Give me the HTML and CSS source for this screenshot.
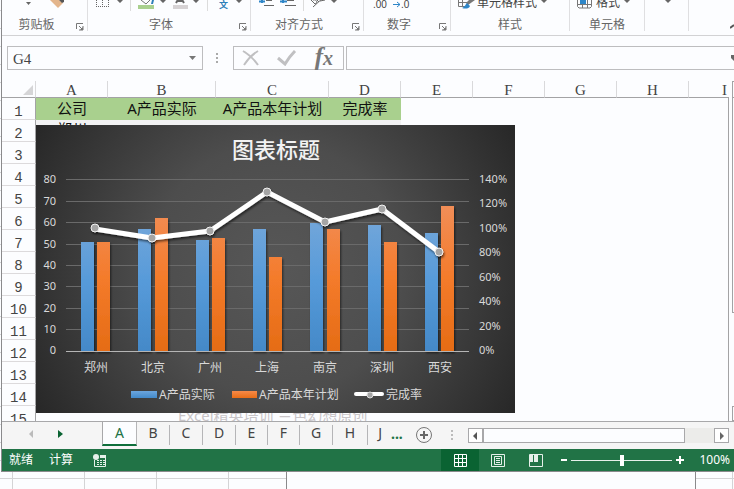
FILE: index.html
```html
<!DOCTYPE html>
<html lang="zh-CN">
<head>
<meta charset="utf-8">
<title>图表标题</title>
<link rel="stylesheet" href="styles.css">
</head>
<body>
<main class="window">
  <section class="ribbon">
    <div class="group clipboard">
      <svg class="tools" width="85" height="12" viewBox="0 0 85 12">
        <path d="M24 2h5l-2.500 3z" fill="#666"/>
        <path d="M48 0h9l4 3-5 5-2-2z" fill="#e3b58c"/><path d="M57 0h5v2l-2 1z" fill="#555"/>
      </svg>
      <div class="caption">剪贴板<button class="launch" aria-label="剪贴板"><svg width="8" height="8" viewBox="0 0 8 8"><path d="M.5 6V.5H7M3 3l3 3M7 3v4H3" fill="none" stroke="#777"/><path d="M7 4v3H4z" fill="#777"/></svg></button></div>
    </div>
    <div class="group font">
      <svg class="tools" width="162" height="12" viewBox="0 0 162 12">
        <g stroke="#666" stroke-dasharray="1 1" fill="none"><path d="M8 6.500h13M8.500 0v7M14.500 0v7M20.500 0v7"/></g>
        <path d="M29 0h6l-3 3zM72 0h6l-3 3zM105 0h6l-3 3zM148 0h6l-3 3z" fill="#666"/>
        <path d="M42.500 0v11M119.500 0v11" stroke="#dcdcdc"/>
        <path d="M53 0l5 4 5-5" fill="none" stroke="#777"/><path d="M64 0l2 0-1 4h-2z" fill="#2e7fb8"/>
        <path d="M50 5h16v4H50z" fill="#a9d08e"/>
        <path d="M88 3l3-5h2l3 5M89 1h6" fill="none" stroke="#666" stroke-width="2"/>
        <path d="M85 5h15v4H85z" fill="#d6d2d4"/>
        <text class="phonetic" x="131" y="8">文</text>
      </svg>
      <div class="caption">字体<button class="launch" aria-label="字体"><svg width="8" height="8" viewBox="0 0 8 8"><path d="M.5 6V.5H7M3 3l3 3M7 3v4H3" fill="none" stroke="#777"/><path d="M7 4v3H4z" fill="#777"/></svg></button></div>
    </div>
    <div class="group align">
      <svg class="tools" width="112" height="12" viewBox="0 0 112 12">
        <path d="M11 0v3M8 1.500h6M32 0v3M29 1.500h7" stroke="#2e86c8" stroke-width="2"/>
        <path d="M15 .5h6M13 5.500h10M36 .5h7M34 5.500h11" stroke="#666"/>
        <path d="M52.500 0v11" stroke="#dcdcdc"/>
        <path d="M60 0l4 4c3-1 2-5-2-4M66 0l2 2M62 7L74-4M69 1l5-1" fill="none" stroke="#666" stroke-width="1"/>
        <path d="M80 0h6l-3 3z" fill="#666"/>
      </svg>
      <div class="caption">对齐方式<button class="launch" aria-label="对齐方式"><svg width="8" height="8" viewBox="0 0 8 8"><path d="M.5 6V.5H7M3 3l3 3M7 3v4H3" fill="none" stroke="#777"/><path d="M7 4v3H4z" fill="#777"/></svg></button></div>
    </div>
    <div class="group number">
      <svg class="tools" width="86" height="12" viewBox="0 0 86 12">
        <text class="decimal" x="9" y="8">.00</text><text class="decimal" x="37" y="8">.0</text>
        <path d="M29 4.500h7M33 2l3 2.500L33 7" fill="none" stroke="#2e86c8" stroke-width="1"/>
      </svg>
      <div class="caption">数字<button class="launch" aria-label="数字"><svg width="8" height="8" viewBox="0 0 8 8"><path d="M.5 6V.5H7M3 3l3 3M7 3v4H3" fill="none" stroke="#777"/><path d="M7 4v3H4z" fill="#777"/></svg></button></div>
    </div>
    <div class="group styles">
      <div class="tools command">
        <svg width="18" height="12" viewBox="0 0 18 12"><path d="M.5 0v6.500H8M4.500 0v6M0 2.500h9" fill="none" stroke="#777"/><path d="M17 0l-7 5-2-2 3-3z" fill="#777"/><path d="M9 3l3 3c-1 3-5 3-8 2 3-1 3-3 5-5z" fill="#2e86c8"/></svg>
        <span>单元格样式</span>
        <svg width="6" height="12" viewBox="0 0 6 12"><path d="M0 0h6L3 3z" fill="#666"/></svg>
      </div>
      <div class="caption">样式</div>
    </div>
    <div class="group cells">
      <div class="tools command">
        <svg width="18" height="12" viewBox="0 0 18 12"><path d="M.5 0v6.500L2 8h11l1.500-1.500V0M5.500 0v8M10.500 0v8M1 4.500h13" fill="none" stroke="#777"/><path d="M3 0h6v4H3z" fill="#2e86c8"/></svg>
        <span>格式</span>
        <svg width="6" height="12" viewBox="0 0 6 12"><path d="M0 0h6L3 3z" fill="#666"/></svg>
      </div>
      <div class="caption">单元格</div>
    </div>
    <div class="group editing">
      <svg class="tools" width="43" height="12" viewBox="0 0 43 12"><path d="M20 0h6l-3 3z" fill="#666"/></svg>
    </div>
    <button class="collapse" aria-label="折叠"><svg width="4" height="5" viewBox="0 0 4 5"><path d="M0 4l4-3" stroke="#555" stroke-width="2"/></svg></button>
  </section>

  <section class="formula">
    <div class="namebox"><input type="text" value="G4" aria-label="名称框"><button aria-label="名称"><svg width="7" height="4" viewBox="0 0 7 4"><path d="M0 0h7L3.500 4z" fill="#777"/></svg></button></div>
    <svg class="grip" width="3" height="12" viewBox="0 0 3 12"><path d="M0 1h2v2H0zM0 5h2v2H0zM0 9h2v2H0z" fill="#aaa"/></svg>
    <div class="actions">
      <button aria-label="取消"><svg width="18" height="16" viewBox="0 0 18 16"><path d="M1 1c5 3 11 8 15 14M16 1C11 4 6 9 2 15" fill="none" stroke="#c0c0c2" stroke-width="2"/></svg></button>
      <button aria-label="输入"><svg width="20" height="16" viewBox="0 0 20 16"><path d="M1 8l7 6C11 9 14 5 18 1" fill="none" stroke="#c0c0c2" stroke-width="3"/></svg></button>
      <button class="fx"><span class="f">f</span><span class="x">x</span></button>
    </div>
    <div class="entry"><input type="text" aria-label="编辑栏"><svg width="3" height="6" viewBox="0 0 3 6"><path d="M0 0h3v6L0 3z" fill="#666"/></svg></div>
  </section>

  <section class="sheet">
    <div class="grid">
      <table>
        <colgroup><col class="c-head"><col class="c-std"><col class="c-b"><col class="c-c"><col class="c-std"><col class="c-std"><col class="c-std"><col class="c-std"><col class="c-std"><col class="c-std"></colgroup>
        <thead><tr><th class="corner"><svg width="10" height="10" viewBox="0 0 10 10"><path d="M10 0v10H0z" fill="#d5d5d7"/></svg></th><th>A</th><th>B</th><th>C</th><th>D</th><th>E</th><th>F</th><th>G</th><th>H</th><th>I</th></tr></thead>
        <tbody>
          <tr class="titles"><th>1</th><td>公司</td><td>A产品实际</td><td>A产品本年计划</td><td>完成率</td></tr>
          <tr class="shaded"><th>2</th><td>郑州</td><td></td><td></td><td></td></tr>
          <tr><th>3</th></tr><tr><th>4</th></tr><tr><th>5</th></tr><tr><th>6</th></tr><tr><th>7</th></tr><tr><th>8</th></tr><tr><th>9</th></tr><tr><th>10</th></tr><tr><th>11</th></tr><tr><th>12</th></tr><tr><th>13</th></tr><tr><th>14</th></tr>
          <tr><th>15</th><td></td><td class="credit" colspan="3">Excel精英培训 兰色幻想原创</td></tr>
        </tbody>
      </table>
      <svg class="chart" width="479" height="288" viewBox="0 0 479 288" role="img" aria-label="图表标题">
        <defs>
          <radialGradient id="bg" gradientUnits="userSpaceOnUse" cx="240" cy="144" r="280"><stop offset="0" stop-color="#575757"/><stop offset=".45" stop-color="#4d4d4d"/><stop offset="1" stop-color="#272727"/></radialGradient>
          <linearGradient id="blue" gradientUnits="userSpaceOnUse" x1="0" y1="90" x2="0" y2="226"><stop offset="0" stop-color="#74a7da"/><stop offset=".5" stop-color="#569ad9"/><stop offset="1" stop-color="#4489c8"/></linearGradient>
          <linearGradient id="orange" gradientUnits="userSpaceOnUse" x1="0" y1="80" x2="0" y2="226"><stop offset="0" stop-color="#f18e58"/><stop offset=".5" stop-color="#f47b2b"/><stop offset="1" stop-color="#e56c15"/></linearGradient>
          <linearGradient id="keyBlue" x1="0" y1="0" x2="0" y2="1"><stop offset="0" stop-color="#6ba5dd"/><stop offset="1" stop-color="#438aca"/></linearGradient>
          <linearGradient id="keyOrange" x1="0" y1="0" x2="0" y2="1"><stop offset="0" stop-color="#f58a4a"/><stop offset="1" stop-color="#e86d16"/></linearGradient>
          <filter id="shade" x="-10%" y="-20%" width="120%" height="150%"><feDropShadow dx="1" dy="2" stdDeviation="1" flood-color="#000" flood-opacity=".55"/></filter>
        </defs>
        <rect width="479" height="288" fill="url(#bg)"/>
        <text class="title" x="240" y="33">图表标题</text>
        <path class="rules" d="M30 54.500h403M30 76.500h403M30 97.500h403M30 119.500h403M30 140.500h403M30 161.500h403M30 183.500h403M30 204.500h403"/>
        <g filter="url(#shade)">
          <path fill="url(#blue)" d="M45 117h13v109H45zM102 104h13v122h-13zM160 115h13v111h-13zM217 104h13v122h-13zM274 98h13v128h-13zM332 100h13v126h-13zM389 108h13v118h-13z"/>
          <path fill="url(#orange)" d="M61 117h13v109H61zM119 93h13v133h-13zM176 113h13v113h-13zM233 132h13v94h-13zM291 104h13v122h-13zM348 117h13v109h-13zM405 81h13v145h-13z"/>
        </g>
        <path d="M30 226.500h403" stroke="#b5b5b5"/>
        <g filter="url(#shade)">
          <path d="M59 104l57 9 58-7 57-39 58 30 57-13 57 43" fill="none" stroke="#fff" stroke-width="5" stroke-linejoin="round"/>
          <g fill="#a5a5a5" stroke="#f2f2f2" stroke-width="1"><circle cx="59" cy="103" r="4"/><circle cx="116" cy="113" r="4"/><circle cx="174" cy="106" r="4"/><circle cx="231" cy="67" r="4"/><circle cx="289" cy="97" r="4"/><circle cx="346" cy="84" r="4"/><circle cx="403" cy="127" r="4"/></g>
        </g>
        <g class="scale left"><text x="20" y="58">80</text><text x="20" y="80">70</text><text x="20" y="101">60</text><text x="20" y="123">50</text><text x="20" y="144">40</text><text x="20" y="165">30</text><text x="20" y="187">20</text><text x="20" y="208">10</text><text x="20" y="229">0</text></g>
        <g class="scale"><text x="443" y="58">140%</text><text x="443" y="82">120%</text><text x="443" y="107">100%</text><text x="443" y="131">80%</text><text x="443" y="156">60%</text><text x="443" y="180">40%</text><text x="443" y="205">20%</text><text x="443" y="229">0%</text></g>
        <g class="names"><text x="60" y="247">郑州</text><text x="117" y="247">北京</text><text x="174" y="247">广州</text><text x="231" y="247">上海</text><text x="289" y="247">南京</text><text x="346" y="247">深圳</text><text x="404" y="247">西安</text></g>
        <rect x="95" y="266" width="26" height="7" fill="url(#keyBlue)"/>
        <rect x="196" y="266" width="25" height="7" fill="url(#keyOrange)"/>
        <path d="M320 269h26" stroke="#fff" stroke-width="4" stroke-linecap="round"/><circle cx="334" cy="270" r="3" fill="#a5a5a5" stroke="#ddd"/>
        <g class="keys"><text x="123" y="274">A产品实际</text><text x="223" y="274">A产品本年计划</text><text x="350" y="274">完成率</text></g>
      </svg>
    </div>
    <div class="vscroll"><span class="up"></span><span class="thumb"></span><span class="down"></span></div>
  </section>

  <nav class="tabs">
    <div class="steps">
      <button aria-label="上一个"><svg width="5" height="8" viewBox="0 0 5 8"><path d="M4 0v8L0 4z" fill="#bbb"/></svg></button>
      <button aria-label="下一个"><svg width="5" height="8" viewBox="0 0 5 8"><path d="M0 0v8l5-4z" fill="#0a6332"/></svg></button>
    </div>
    <button class="tab active">A</button><button class="tab">B</button><button class="tab">C</button><button class="tab">D</button><button class="tab narrow">E</button><button class="tab narrow">F</button><button class="tab">G</button><button class="tab wide">H</button><button class="tab cut">J</button>
    <button class="more">...</button>
    <button class="add" aria-label="新工作表"><svg width="18" height="18" viewBox="0 0 18 18"><circle cx="9" cy="9" r="7.500" fill="none" stroke="#777"/><path d="M5 9h8M9 5v8" stroke="#666" stroke-width="2"/></svg></button>
    <svg class="grip" width="3" height="12" viewBox="0 0 3 12"><path d="M0 1h2v2H0zM0 5h2v2H0zM0 9h2v2H0z" fill="#bbb"/></svg>
    <div class="hscroll">
      <button aria-label="向左"><svg width="4" height="8" viewBox="0 0 4 8"><path d="M4 0v8L0 4z" fill="#555"/></svg></button>
      <span class="thumb"></span><span class="track"></span>
      <button aria-label="向右"><svg width="4" height="8" viewBox="0 0 4 8"><path d="M0 0v8l4-4z" fill="#666"/></svg></button>
    </div>
  </nav>

  <footer class="status">
    <span>就绪</span><span>计算</span>
    <svg class="macro" width="14" height="13" viewBox="0 0 14 13"><path d="M1.500 6v6.500h11V1.500H7M7 2.500h6" fill="none" stroke="#e6f0ea"/><path d="M7 1h6v3H7z" fill="#e6f0ea"/><circle cx="3" cy="3" r="3" fill="#e6f0ea"/><path d="M4 6.500h2M7 6.500h2M10 6.500h2M4 8.500h2M7 8.500h2M10 8.500h2M4 10.500h2M7 10.500h2M10 10.500h2" stroke="#e6f0ea"/></svg>
    <div class="views">
      <button class="on" aria-label="普通"><svg width="13" height="13" viewBox="0 0 13 13"><path d="M.5.5h12v12H.5zM4.500 0v13M8.500 0v13M0 4.500h13M0 8.500h13" fill="none" stroke="#fff"/></svg></button>
      <button aria-label="页面布局"><svg width="14" height="13" viewBox="0 0 14 13"><path d="M.5.5h13v12H.5zM3.500 2.500h7v8h-7zM5 4.500h4M5 6.500h4M5 8.500h4" fill="none" stroke="#e6f0ea"/></svg></button>
      <button aria-label="分页预览"><svg width="14" height="13" viewBox="0 0 14 13"><path d="M.5.5h13v12H.5z" fill="none" stroke="#e6f0ea"/><path d="M1 1h3v7H1zM5 1h4v7H5z" fill="#e6f0ea"/></svg></button>
    </div>
    <div class="zoom">
      <button aria-label="缩小"><svg width="6" height="8" viewBox="0 0 6 8"><path d="M0 4h6" stroke="#fff" stroke-width="2"/></svg></button>
      <input type="range" min="0" max="100" value="50" aria-label="缩放">
      <button aria-label="放大"><svg width="8" height="8" viewBox="0 0 8 8"><path d="M0 4h8M4 0v8" stroke="#fff" stroke-width="2"/></svg></button>
      <span class="percent">100%</span>
    </div>
  </footer>
</main>
<div class="behind"><div class="pane"></div></div>
</body>
</html>
```
FILE: styles.css
```css
* { box-sizing: border-box; }
html, body { height: 100%; }
body {
  margin: 0;
  display: flex;
  flex-direction: column;
  overflow: hidden;
  font: 12px/16px "Noto Sans", "Noto Sans CJK SC", sans-serif;
  color: #555;
  background-color: #fcfdff;
  background-image:
    repeating-linear-gradient(to bottom, transparent 0 10px, #d4d4d6 10px 11px, transparent 11px 18px),
    repeating-linear-gradient(to right, transparent 0 12px, #d4d4d6 12px 13px, transparent 13px 72px);
}
button, input { font: inherit; color: inherit; margin: 0; padding: 0; border: 0; background: none; border-radius: 0; }
button { display: flex; align-items: center; justify-content: center; flex: none; }
svg { display: block; flex: none; }

.window {
  flex: 1;
  min-height: 0;
  display: flex;
  flex-direction: column;
  margin-left: 1px;
  border-left: 1px solid #8a8a8c;
  border-bottom: 1px solid #8a8a8c;
  background: #fcfdff;
}

.ribbon { display: flex; flex: none; height: 36px; padding-bottom: 4px; border-bottom: 1px solid #d2d2d4; overflow: hidden; }
.group { flex: none; border-right: 1px solid #dfdfe1; }
.clipboard { width: 86px; }
.font { width: 163px; }
.align { width: 113px; }
.number { width: 87px; }
.styles { width: 119px; }
.cells { width: 75px; }
.editing { width: 44px; }
.tools { height: 12px; margin-bottom: 5px; }
.command { display: flex; gap: 4px; padding-left: 7px; color: #444; }
.command span { height: 12px; line-height: 12px; margin: -3px 0 0 -3px; }
.caption { display: flex; justify-content: center; position: relative; padding-right: 16px; color: #666; }
.styles .caption, .cells .caption { padding-right: 0; }
.launch { position: absolute; right: 3px; bottom: 2px; }
.phonetic { font-size: 9px; font-weight: 700; fill: #2e7fb8; }
.decimal { font: 10px "Liberation Sans", sans-serif; fill: #444; }
.collapse { margin: auto 0 0 auto; padding-bottom: 2px; }

.formula { display: flex; flex: none; align-items: center; height: 45px; padding: 10px 0 11px 5px; }
.namebox, .actions, .entry { display: flex; align-items: center; height: 24px; border: 1px solid #bdbdbf; }
.namebox { width: 196px; padding: 0 6px 0 5px; }
.namebox input { flex: 1; min-width: 0; padding-top: 2px; font: 15px/20px "Liberation Serif", serif; color: #444; }
.formula .grip { margin: 0 14px 0 13px; }
.actions { width: 111px; padding: 0 10px 0 8px; justify-content: space-between; }
.fx { font: italic 700 25px/20px "Liberation Serif", serif; color: #777; align-items: baseline; padding-bottom: 2px; }
.fx .x { font-size: 20px; }
.entry { flex: 1; min-width: 0; margin-left: 2px; border-right: 0; }
.entry input { flex: 1; min-width: 0; }

.sheet { flex: 1; min-height: 0; display: flex; border-bottom: 1px solid #a8a8aa; }
.grid { flex: 1; min-width: 0; position: relative; overflow: hidden; }
.grid::after { content: ""; position: absolute; top: 16px; right: 0; bottom: 0; width: 1px; background: #a3a3a5; }
table { table-layout: fixed; width: 758px; border-collapse: separate; border-spacing: 0; }
.c-head { width: 34px; }
.c-std { width: 72px; }
.c-b { width: 108px; }
.c-c { width: 113px; }
th { padding: 0; font: 15px/14px "Liberation Serif", serif; color: #444; }
thead th { height: 17px; padding-top: 2px; border-right: 1px solid #d9d9db; border-bottom: 1px solid #a3a3a5; }
thead .corner svg { margin-left: auto; margin-right: 2px; }
tbody th { height: 22px; padding-top: 7px; border-right: 1px solid #a3a3a5; border-bottom: 1px solid #dcdadc; font: 14px/14px "Liberation Mono", monospace; }
td { padding: 0; height: 22px; font-size: 15px; line-height: 18px; text-align: center; vertical-align: top; white-space: nowrap; color: #111; }
.titles td { background: #a9d08e; line-height: 20px; }
.shaded td { background: #f2f2f3; }
td.credit { text-align: left; padding-left: 70px; color: #c9c5c8; }
.chart { position: absolute; left: 34px; top: 44px; }
.title { font-size: 22px; font-weight: 500; fill: #f2f2f2; text-anchor: middle; }
.rules { stroke: #6a6a6a; fill: none; }
.scale { font-size: 11px; fill: #d9d9d9; }
.left { text-anchor: end; }
.names { text-anchor: middle; font-size: 12px; fill: #d9d9d9; }
.keys { font-size: 12px; fill: #d9d9d9; }

.vscroll { width: 5px; padding-left: 3px; display: flex; flex-direction: column; }
.vscroll span { border: 1px solid #a3a3a5; border-right: 0; }
.vscroll .up { height: 16px; border-bottom: 0; }
.vscroll .thumb { flex: 2; }
.vscroll .down { height: 15px; margin-top: 93px; }

.tabs { display: flex; flex: none; align-items: flex-start; height: 27px; background: #f5f5f5; }
.steps { display: flex; width: 100px; height: 24px; padding-left: 27px; gap: 24px; }
.tab { width: 33px; height: 20px; margin-top: 3px; padding-bottom: 4px; border-right: 1px solid #b5b5b7; font-size: 14px; line-height: 16px; color: #444; }
.tab.narrow { width: 32px; }
.tab.wide { width: 35px; }
.tab.active { width: 35px; height: 24px; margin-top: 0; padding-bottom: 0; border-left: 1px solid #a8a8aa; border-bottom: 2px solid #0f6f3c; background: #fcfdff; color: #217346; }
.tab.cut { width: 14px; border-right: 0; overflow: hidden; justify-content: flex-end; }
.more { height: 18px; margin: 3px 0 0 9px; font-weight: 700; font-size: 14px; color: #217346; }
.add { margin: 4px 0 0 12px; }
.tabs .grip { margin: 7px 0 0 18px; }
.hscroll { display: flex; flex: 1; min-width: 0; height: 15px; margin: 6px 5px 0 14px; }
.hscroll button { width: 15px; border: 1px solid #a8a8aa; background: #fff; }
.hscroll .thumb { flex: 1; border: 1px solid #a8a8aa; background: #fcfdff; }
.hscroll .track { width: 29px; background: #ececea; }

.status { display: flex; flex: none; align-items: center; height: 22px; padding-left: 7px; gap: 16px; background: #217346; color: #fff; line-height: 20px; }
.macro { margin-left: 4px; }
.views { display: flex; align-self: stretch; margin-left: auto; }
.views button { width: 38px; }
.views .on { background: #0a6332; }
.zoom { display: flex; align-items: center; gap: 4px; padding-right: 4px; margin-left: -10px; }
.zoom input { width: 101px; height: 12px; appearance: none; background: linear-gradient(#e6f0ea, #e6f0ea) center / 100% 1px no-repeat; }
.zoom input::-webkit-slider-thumb { appearance: none; width: 4px; height: 11px; background: #fff; }
.percent { margin-left: 11px; }

.behind { flex: none; height: 17px; padding: 0 38px 0 286px; }
.pane { height: 100%; background: #fcfdff; border: solid #8a8a8c; border-width: 0 1px; }
```
